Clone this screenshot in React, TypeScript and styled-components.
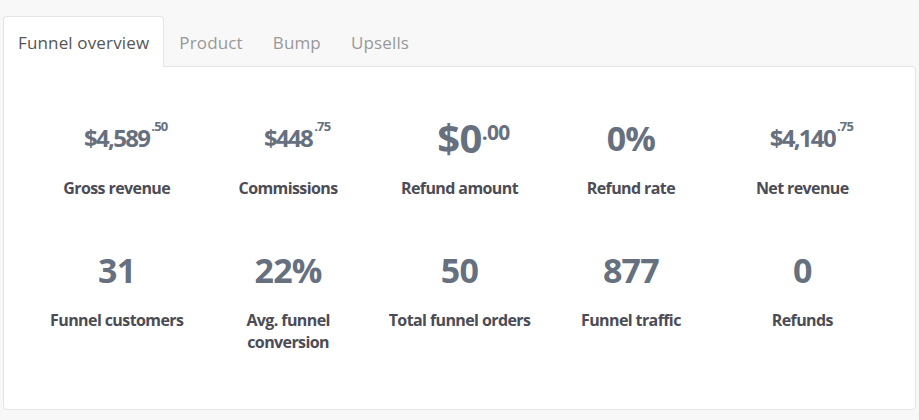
import React, { useState } from 'react'
import styled, { createGlobalStyle } from 'styled-components'

const GlobalStyle = createGlobalStyle`
    html, body {
        margin: 0;
        padding: 0;
        background: #f8f8f8;
        font-family: "Open Sans", "Noto Sans", sans-serif;
    }
`

type Size = 'sm' | 'md' | 'lg'

type Stat = {
    value: string
    cents?: string
    size: Size
    label: string
}

const stats: Stat[] = [
    { value: '$4,589', cents: '.50', size: 'sm', label: 'Gross revenue' },
    { value: '$448', cents: '.75', size: 'sm', label: 'Commissions' },
    { value: '$0', cents: '.00', size: 'lg', label: 'Refund amount' },
    { value: '0%', size: 'md', label: 'Refund rate' },
    { value: '$4,140', cents: '.75', size: 'sm', label: 'Net revenue' },
    { value: '31', size: 'md', label: 'Funnel customers' },
    { value: '22%', size: 'md', label: 'Avg. funnel conversion' },
    { value: '50', size: 'md', label: 'Total funnel orders' },
    { value: '877', size: 'md', label: 'Funnel traffic' },
    { value: '0', size: 'md', label: 'Refunds' },
]

const amountSizes: Record<Size, string> = { sm: '24px', md: '34px', lg: '40px' }
const amountSpacing: Record<Size, string> = { sm: '-1.7px', md: '-0.8px', lg: '-0.6px' }

const tabs = ['Funnel overview', 'Product', 'Bump', 'Upsells']

const App: React.FC = () => {
    const [activeTab, setActiveTab] = useState(0)

    return (
        <>
            <GlobalStyle />
            <SPage>
                <STabList>
                    {tabs.map((t, i) => (
                        <STab key={t} active={i === activeTab} onClick={() => setActiveTab(i)}>
                            {t}
                        </STab>
                    ))}
                </STabList>
                <SPanel>
                    <SGrid>
                        {stats.map(s => (
                            <SStat key={s.label}>
                                <SValue>
                                    <SAmount size={s.size}>
                                        {s.value}
                                        {s.cents ? <SCents size={s.size}>{s.cents}</SCents> : null}
                                    </SAmount>
                                </SValue>
                                <SLabel>{s.label}</SLabel>
                            </SStat>
                        ))}
                    </SGrid>
                </SPanel>
            </SPage>
        </>
    )
}

export default App

const SPage = styled.div`
    padding: 16px 3px 0 3px;
`

const STabList = styled.div`
    display: flex;
    height: 50px;
`

const STab = styled.button<{ active: boolean }>`
    height: 51px;
    margin-bottom: -1px;
    padding: 0 14px;
    border: 1px solid ${p => p.active ? '#e4e4e4' : 'transparent'};
    border-bottom: none;
    border-radius: 4px 4px 0 0;
    background: ${p => p.active ? '#fff' : 'transparent'};
    color: ${p => p.active ? '#555' : '#999'};
    font-family: inherit;
    font-size: 17px;
    letter-spacing: 0.15px;
    position: relative;
    z-index: 1;
    cursor: pointer;
`

const SPanel = styled.div`
    background: #fff;
    border: 1px solid #e4e4e4;
    border-radius: 0 4px 4px 4px;
    height: 344px;
    width: 913px;
    box-sizing: border-box;
    padding: 46px 27px 0 27px;
`

const SGrid = styled.div`
    display: grid;
    grid-template-columns: repeat(5, 1fr);
    row-gap: 46px;
`

const SStat = styled.div`
    display: flex;
    flex-direction: column;
    align-items: center;
    text-align: center;
    padding: 0 8px;
`

const SValue = styled.div`
    display: flex;
    align-items: baseline;
    justify-content: center;
    height: 50px;
    line-height: 50px;
    color: #66707f;
    font-weight: 700;
`

const SAmount = styled.span<{ size: Size }>`
    position: relative;
    font-size: ${p => amountSizes[p.size]};
    letter-spacing: ${p => amountSpacing[p.size]};
`

const SCents = styled.span<{ size: Size }>`
    position: absolute;
    left: 100%;
    top: ${p => p.size === 'sm' ? '-12px' : '-6px'};
    margin-left: ${p => p.size === 'sm' ? '2px' : '0'};
    font-size: ${p => p.size === 'sm' ? '13px' : '21px'};
    letter-spacing: -0.8px;
    line-height: 50px;
`

const SLabel = styled.div`
    margin-top: 14px;
    font-size: 16px;
    line-height: 22px;
    font-weight: 700;
    letter-spacing: -0.6px;
    color: #4b4c55;
`
